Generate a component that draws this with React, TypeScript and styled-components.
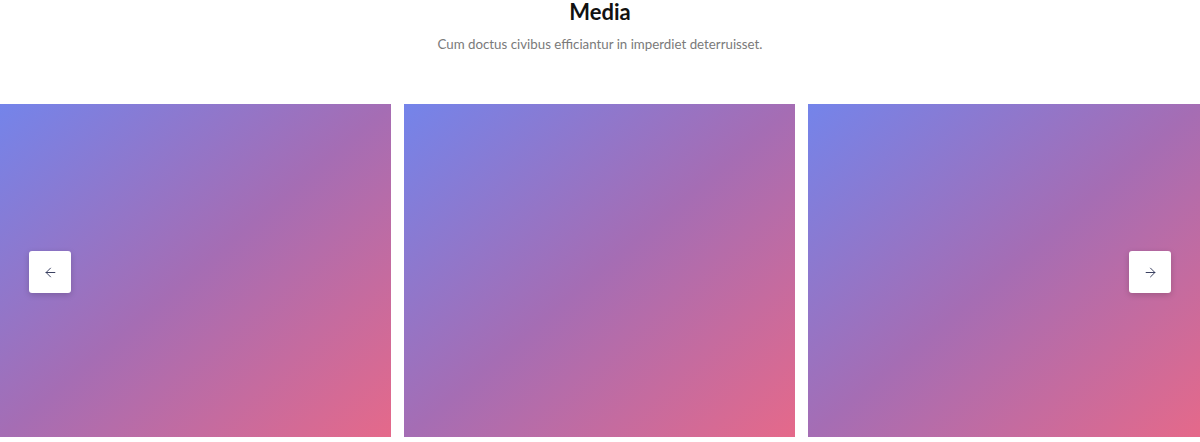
import React from 'react';
import styled, { createGlobalStyle } from 'styled-components';
import { ArrowLeft, ArrowRight } from 'lucide-react';

const GlobalStyle = createGlobalStyle`
  html, body {
    margin: 0;
    padding: 0;
    background: #ffffff;
    font-family: 'Nunito', 'Lato', 'Noto Sans', sans-serif;
  }
  * {
    box-sizing: border-box;
  }
`;

const slides = [1, 2, 3];

const App: React.FC = () => {
  return (
    <>
      <GlobalStyle />
      <Section>
        <Heading>
          <Title>Media</Title>
          <Subtitle>Cum doctus civibus efficiantur in imperdiet deterruisset.</Subtitle>
        </Heading>
        <Carousel>
          <Track>
            {slides.map((s) => (
              <Slide key={s} />
            ))}
          </Track>
          <NavButton side="left" aria-label="previous">
            <ArrowLeft size={15} strokeWidth={1.5} />
          </NavButton>
          <NavButton side="right" aria-label="next">
            <ArrowRight size={15} strokeWidth={1.5} />
          </NavButton>
        </Carousel>
      </Section>
    </>
  );
};

export default App;

const Section = styled.section`
  width: 1200px;
  display: flex;
  flex-direction: column;
`;

const Heading = styled.div`
  display: flex;
  flex-direction: column;
  align-items: center;
  padding-top: 1px;
  height: 104px;
`;

const Title = styled.h2`
  margin: 0;
  font-family: 'Lato', sans-serif;
  font-size: 22px;
  line-height: 22px;
  font-weight: 700;
  color: #111111;
`;

const Subtitle = styled.p`
  margin: 12px 0 0;
  font-family: 'Lato', sans-serif;
  font-size: 13.3px;
  line-height: 18px;
  color: #7a7a7a;
`;

const Carousel = styled.div`
  position: relative;
  width: 100%;
`;

const Track = styled.div`
  display: grid;
  grid-template-columns: 391px 391px 392px;
  column-gap: 13px;
`;

const Slide = styled.div`
  height: 333px;
  background: linear-gradient(to bottom right, #7484ea 0%, #a56db4 50%, #e5698a 100%);
`;

const NavButton = styled.button<{ side: 'left' | 'right' }>`
  position: absolute;
  top: 147px;
  ${(p) => (p.side === 'left' ? 'left: 29px;' : 'right: 29px;')}
  width: 42px;
  height: 42px;
  border: none;
  border-radius: 3px;
  background: #ffffff;
  box-shadow: 0 2px 6px rgba(0, 0, 0, 0.18);
  color: #2f3557;
  display: flex;
  align-items: center;
  justify-content: center;
  padding: 0;
  cursor: pointer;
`;
